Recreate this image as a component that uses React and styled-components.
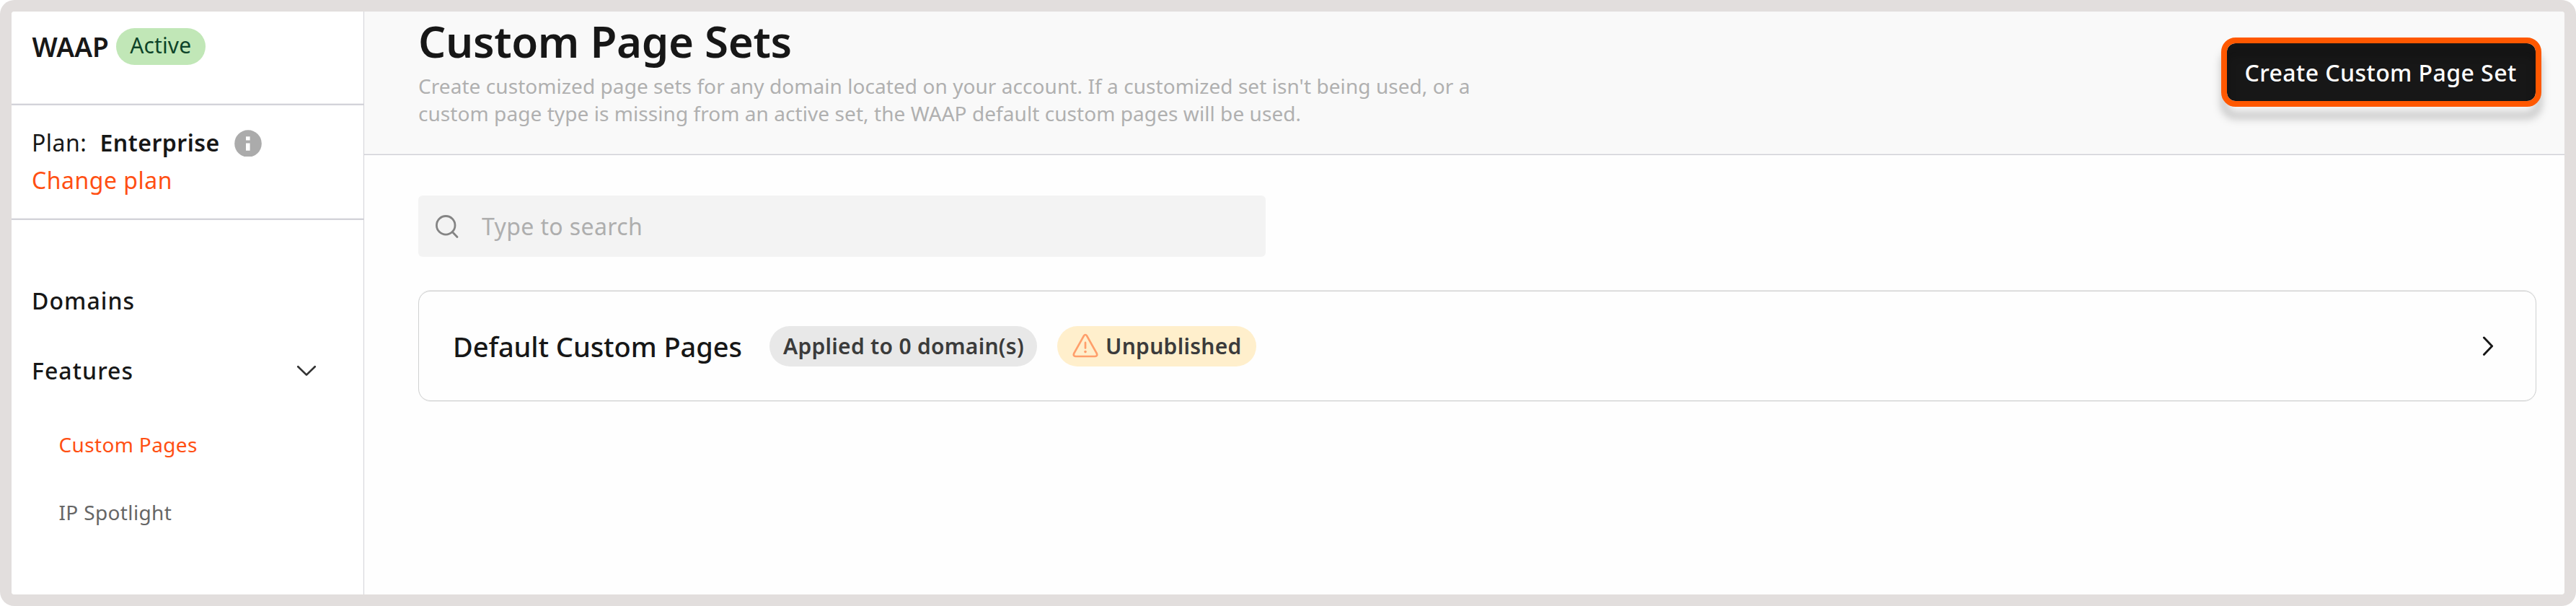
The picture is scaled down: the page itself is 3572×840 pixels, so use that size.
import React from "react";
import styled, { createGlobalStyle } from "styled-components";

const GlobalStyle = createGlobalStyle`
  *, *::before, *::after { box-sizing: border-box; }
  body { margin: 0; background: #fff; font-family: "Noto Sans", sans-serif; color: #171717; }
  h1, h2, p { margin: 0; }
  button, input { font-family: inherit; }
  svg { display: block; flex: none; }
`;

const Frame = styled.div`
  display: flex;
  width: 100%;
  height: 840px;
  padding: 16px;
  background: #e2dedd;
  border-radius: 20px;
`;

const Window = styled.div`
  display: flex;
  flex: 1;
  min-width: 0;
  overflow: hidden;
  background: #fefefe;
  border-radius: 4px;
`;

const Sidebar = styled.aside`
  width: 489px;
  flex: none;
  background: #fff;
  border-right: 1px solid #d3d3d8;
`;

const ProductSection = styled.section`
  display: flex;
  align-items: flex-start;
  gap: 10px;
  height: 130px;
  padding: 23px 0 0 28.5px;
  border-bottom: 2px solid #d3d3d9;
  box-shadow: inset 0 -1px 0 #efeff1;
`;

const ProductName = styled.h2`
  font-size: 37px;
  line-height: 51px;
  font-weight: 600;
`;

const StatusPill = styled.span`
  height: 51px;
  padding: 0 19.5px;
  font-size: 30px;
  line-height: 47px;
  letter-spacing: 0.1px;
  color: #0e4429;
  background: #c1e7b7;
  border-radius: 26px;
`;

const PlanSection = styled.section`
  height: 159px;
  padding: 26px 0 0 28px;
  font-size: 32px;
  line-height: 52px;
  letter-spacing: 0.5px;
  border-bottom: 2px solid #d3d3d9;
  box-shadow: inset 0 -1px 0 #efeff1;
`;

const PlanRow = styled.div`
  display: flex;
  align-items: center;
`;

const PlanName = styled.span`
  margin: 0 20px 0 18px;
  font-weight: 600;
`;

const PlanLink = styled.a`
  color: #ff4f12;
`;

const Nav = styled.nav`
  display: flex;
  flex-direction: column;
  padding-top: 63px;
`;

const NavItem = styled.a`
  display: flex;
  align-items: center;
  justify-content: space-between;
  height: 97px;
  padding: 0 65px 0 28px;
  font-size: 32px;
  font-weight: 500;
  letter-spacing: 1.05px;
`;

const SubNav = styled.div`
  padding: 7.5px 0 0 65.5px;
`;

const SubNavItem = styled.a`
  display: flex;
  align-items: center;
  height: 93.5px;
  font-size: 28px;
  letter-spacing: 0.35px;
  color: ${(p) => (p.$active ? "#ff4f12" : "#666")};
`;

const Main = styled.main`
  flex: 1;
  min-width: 0;
`;

const Header = styled.header`
  display: flex;
  justify-content: space-between;
  align-items: flex-start;
  height: 199px;
  padding: 11px 40px 0 75px;
  background: #f9f9f9;
  border-bottom: 1px solid #cfcfd5;
  box-shadow: inset 0 -1px 0 #e9e9ec;
`;

const Title = styled.h1`
  font-size: 60px;
  line-height: 60px;
  font-weight: 600;
  letter-spacing: -0.33px;
`;

const Description = styled.p`
  width: 1480px;
  margin-top: 13px;
  font-size: 28px;
  line-height: 38px;
  letter-spacing: 0.063px;
  color: #b0b0b0;
`;

const CreateButton = styled.button`
  position: relative;
  width: 428px;
  height: 80px;
  margin-top: 33px;
  padding: 0 2px 0 0;
  border: 0;
  border-radius: 12px;
  background: #171717;
  color: #fff;
  font-size: 32px;
  font-weight: 500;
  letter-spacing: 0.43px;
  white-space: nowrap;

  &::after {
    content: "";
    position: absolute;
    inset: -8px;
    border: 8px solid #ff5800;
    border-radius: 20px;
    filter: drop-shadow(0 16px 6px rgba(0, 0, 0, 0.25));
  }
`;

const Content = styled.div`
  padding: 56px 39px 0 75px;
`;

const SearchBox = styled.label`
  display: flex;
  align-items: center;
  gap: 30px;
  width: 1175px;
  height: 85px;
  padding-left: 22px;
  background: #f3f3f3;
  border-radius: 6px;
`;

const SearchInput = styled.input`
  flex: 1;
  padding: 0;
  border: 0;
  outline: 0;
  background: transparent;
  font-size: 32px;
  letter-spacing: 0.38px;

  &::placeholder { color: #aeaeae; opacity: 1; }
`;

const SetCard = styled.article`
  display: flex;
  align-items: center;
  height: 153px;
  margin-top: 47px;
  padding: 0 58px 0 47px;
  border: 1px solid #d0d1d1;
  border-radius: 17px;
  box-shadow: 0 -1px 0 #eaeaea, 0 1px 0 #f0f0f0;
`;

const SetName = styled.h2`
  width: 439px;
  font-size: 38px;
  font-weight: 500;
  letter-spacing: -0.07px;
  white-space: nowrap;
`;

const Badge = styled.span`
  display: flex;
  align-items: center;
  gap: 10px;
  width: ${(p) => p.$width}px;
  height: 56px;
  margin-right: 28px;
  padding: 0 0 1px ${(p) => p.$indent}px;
  font-size: 30px;
  font-weight: 600;
  letter-spacing: 0.28px;
  white-space: nowrap;
  color: #3b3b3b;
  background: ${(p) => (p.$warning ? "#ffefcc" : "#e8e8e8")};
  border-radius: 28px;
`;

const CardArrow = styled.span`
  margin-left: auto;
`;

const InfoIcon = () => (
  <svg width="38" height="37" viewBox="0 0 38 37">
    <circle cx="19" cy="19" r="18.8" fill="#ababab" />
    <path fill="#fff" d="M16 9.2h5.6v5.4H16zM16 18.6h5.6v10.2H16z" />
  </svg>
);

const SearchIcon = () => (
  <svg width="36" height="36" viewBox="0 0 36 36" fill="none" stroke="#848484" strokeWidth="2.8" strokeLinecap="round">
    <circle cx="16.2" cy="16.3" r="12.8" />
    <path d="M25.5 25.8L32 32.4" />
  </svg>
);

const ChevronDown = () => (
  <svg width="28" height="16" viewBox="0 0 28 16" fill="none" stroke="#333" strokeWidth="2.7" strokeLinecap="round" strokeLinejoin="round">
    <path d="M2.3 2.3L14 13.6L25.7 2.3" />
  </svg>
);

const ChevronRight = () => (
  <svg width="16" height="28" viewBox="0 0 16 28" fill="none" stroke="#171717" strokeWidth="2.9" strokeLinecap="round" strokeLinejoin="round">
    <path d="M2.4 2L13.6 13.7L2.4 25.4" />
  </svg>
);

const WarningIcon = () => (
  <svg width="36" height="34" viewBox="0 0 36 34" fill="none" stroke="#ff9f6b" strokeWidth="2.7" strokeLinecap="round" strokeLinejoin="round">
    <path d="M16 3.3Q18 0.7 20 3.3L33.8 27.8Q35.2 31.7 31.4 32H4.6Q0.8 31.7 2.2 27.8Z" />
    <path d="M18 12.9V20.4" />
    <circle cx="18" cy="25.6" r="1.8" fill="#ff9f6b" stroke="none" />
  </svg>
);

export default function App() {
  return (
    <>
      <GlobalStyle />
      <Frame>
        <Window>
          <Sidebar>
            <ProductSection>
              <ProductName>WAAP</ProductName>
              <StatusPill>Active</StatusPill>
            </ProductSection>
            <PlanSection>
              <PlanRow>
                <span>Plan:</span>
                <PlanName>Enterprise</PlanName>
                <InfoIcon />
              </PlanRow>
              <PlanLink>Change plan</PlanLink>
            </PlanSection>
            <Nav>
              <NavItem>Domains</NavItem>
              <NavItem>
                Features
                <ChevronDown />
              </NavItem>
              <SubNav>
                <SubNavItem $active>Custom Pages</SubNavItem>
                <SubNavItem>IP Spotlight</SubNavItem>
              </SubNav>
            </Nav>
          </Sidebar>
          <Main>
            <Header>
              <div>
                <Title>Custom Page Sets</Title>
                <Description>
                  Create customized page sets for any domain located on your account. If a customized set isn't being used, or a
                  custom page type is missing from an active set, the WAAP default custom pages will be used.
                </Description>
              </div>
              <CreateButton>Create Custom Page Set</CreateButton>
            </Header>
            <Content>
              <SearchBox>
                <SearchIcon />
                <SearchInput placeholder="Type to search" />
              </SearchBox>
              <SetCard>
                <SetName>Default Custom Pages</SetName>
                <Badge $width={371} $indent={19}>Applied to 0 domain(s)</Badge>
                <Badge $width={276} $indent={21} $warning>
                  <WarningIcon />
                  Unpublished
                </Badge>
                <CardArrow>
                  <ChevronRight />
                </CardArrow>
              </SetCard>
            </Content>
          </Main>
        </Window>
      </Frame>
    </>
  );
}
